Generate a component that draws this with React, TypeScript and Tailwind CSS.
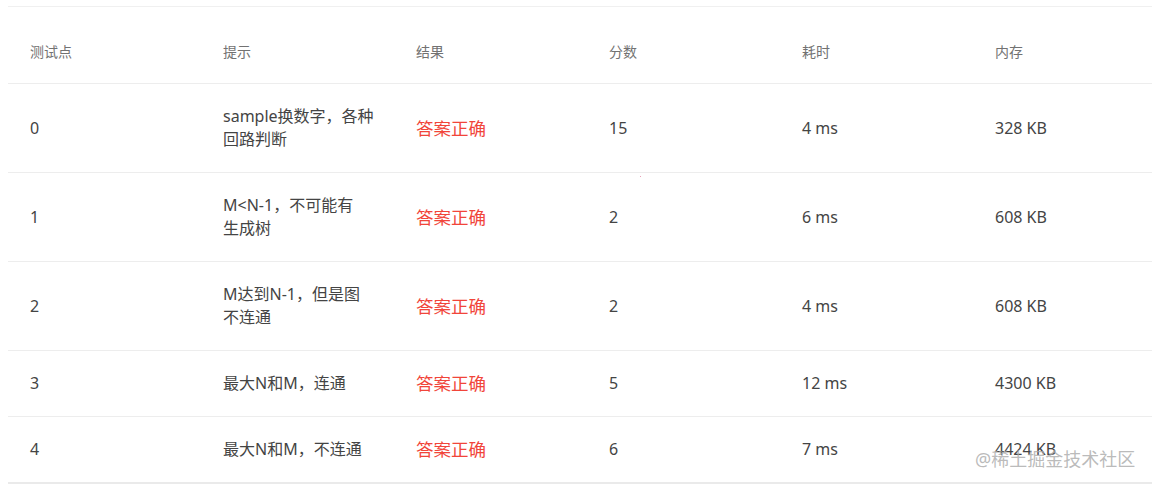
import React from "react";

const rows = [
  { id: "0", hint: ["sample换数字，各种", "回路判断"], score: "15", time: "4 ms", mem: "328 KB" },
  { id: "1", hint: ["M<N-1，不可能有", "生成树"], score: "2", time: "6 ms", mem: "608 KB" },
  { id: "2", hint: ["M达到N-1，但是图", "不连通"], score: "2", time: "4 ms", mem: "608 KB" },
  { id: "3", hint: ["最大N和M，连通"], score: "5", time: "12 ms", mem: "4300 KB" },
  { id: "4", hint: ["最大N和M，不连通"], score: "6", time: "7 ms", mem: "4424 KB" },
];

const heads = ["测试点", "提示", "结果", "分数", "耗时", "内存"];

export default function App() {
  return (
    <div
      className="relative w-[1152px] h-[485px] overflow-hidden bg-white"
      style={{ fontFamily: '"Noto Sans", "Noto Sans CJK SC", sans-serif' }}
    >
      <div className="ml-2 mt-[6px] w-[1160px] border-t border-[#f0f0f0]">
        <div className="grid grid-cols-[repeat(6,193px)] pt-[35px] pb-[21px] border-b border-[#ededed] text-[14px] leading-[20px] text-[#727272]">
          {heads.map((h) => (
            <div key={h} className="pl-[22px]">{h}</div>
          ))}
        </div>
        {rows.map((r, i) => (
          <div
            key={r.id}
            className={
              "grid grid-cols-[repeat(6,193px)] items-center pt-[21px] pb-[21px] text-[16px] leading-[23px] text-[#444] " +
              (i === rows.length - 1 ? "border-b-2 border-[#eaeaea]" : "border-b border-[#ededed]")
            }
          >
            <div className="pl-[22px]">{r.id}</div>
            <div className="pl-[22px]">
              {r.hint.map((l) => (
                <div key={l} className="whitespace-nowrap">{l}</div>
              ))}
            </div>
            <div className="pl-[22px] text-[17.5px] text-[#f1453a]">答案正确</div>
            <div className="pl-[22px]">{r.score}</div>
            <div className="pl-[22px]">{r.time}</div>
            <div className="pl-[22px]">{r.mem}</div>
          </div>
        ))}
      </div>
      <div className="absolute left-[975px] top-[447px] text-[18px] leading-[24px] text-[#a9a9a9]/80 whitespace-nowrap">
        @稀土掘金技术社区
      </div>
      <div className="absolute left-[640px] top-[176px] w-px h-px bg-[#e8a0b8]" />
    </div>
  );
}
